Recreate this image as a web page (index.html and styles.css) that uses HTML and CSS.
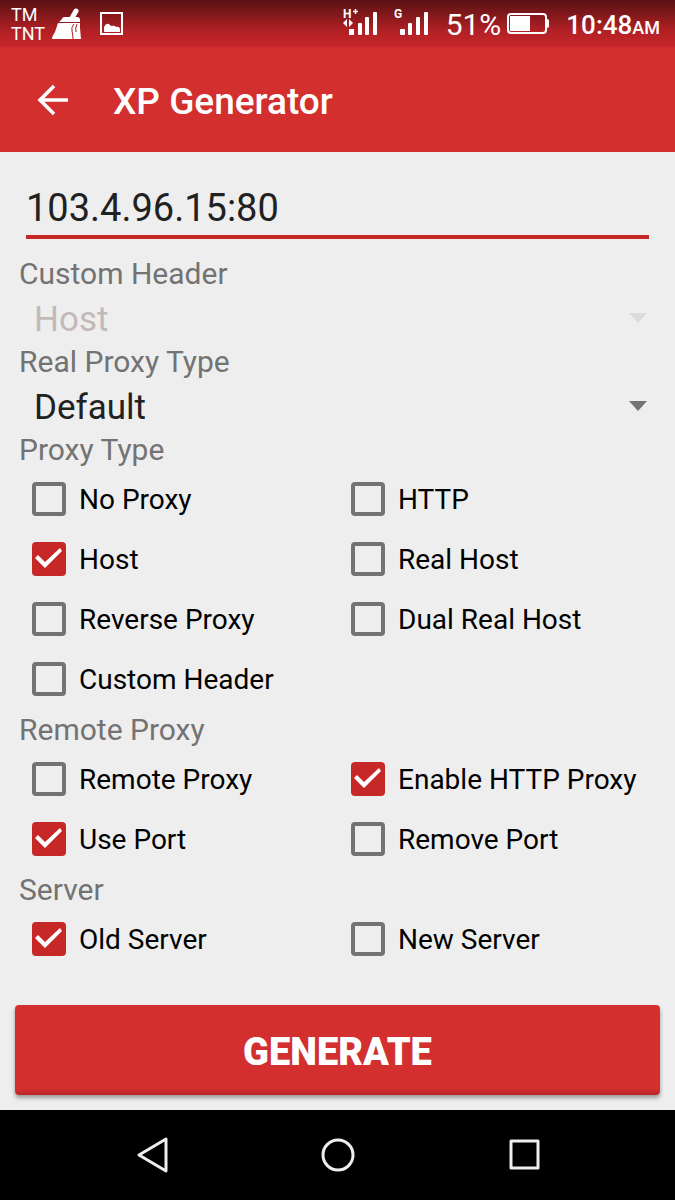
FILE: index.html
```html
<!DOCTYPE html>
<html lang="en">
<head>
<meta charset="utf-8">
<meta name="viewport" content="width=device-width, initial-scale=1">
<title>XP Generator</title>
<link rel="stylesheet" href="styles.css">
</head>
<body>
<div class="screen">
  <div class="status-bar">
    <div class="status-left">
      <div class="carrier"><span>TM</span><span>TNT</span></div>
      <svg class="icon-broom" width="32" height="32" viewBox="0 0 32 32" aria-hidden="true">
        <path d="M21 10l4-7" stroke="#fff" stroke-width="5" stroke-linecap="round"/>
        <path d="M11 11q0-2 3-2h12q3 0 3 3v2H8z" fill="#fff"/>
        <path d="M7 15h22v5l1 11H1q0-3 3-7z" fill="#fff"/>
        <path d="M23 16q-3 3-2 7t1 8M26 16q-2 4-1 8" fill="none" stroke="#a51e22" stroke-width="1"/>
      </svg>
      <svg class="icon-picture" width="24" height="24" viewBox="0 0 24 24" aria-hidden="true">
        <rect x="1" y="1" width="21" height="21" fill="none" stroke="#fff" stroke-width="2"/>
        <path d="M4 20v-5q3-6 7-1 4-1 5 1 4-1 4 3v2z" fill="#fff"/>
      </svg>
    </div>
    <div class="status-right">
      <svg class="icon-signal" width="88" height="30" viewBox="0 0 88 30" fill="#fff" aria-hidden="true">
        <text class="net" x="0" y="11">H</text>
        <path d="M10 4.500h5M12.500 2v5" stroke="#fff" stroke-width="1.500"/>
        <path d="M0 16l4-4v8zM10 16l-4-4v8z"/>
        <rect x="6" y="22" width="5" height="6"/>
        <rect x="15" y="16" width="4" height="12" rx="1"/>
        <rect x="22" y="10" width="4" height="18" rx="1"/>
        <rect x="30" y="5" width="4" height="23" rx="1"/>
        <text class="net" x="51" y="11">G</text>
        <rect x="57" y="22" width="5" height="6" rx="1"/>
        <rect x="65" y="16" width="4" height="12" rx="1"/>
        <rect x="73" y="10" width="4" height="18" rx="1"/>
        <rect x="81" y="5" width="4" height="23" rx="1"/>
      </svg>
      <span class="percent">51%</span>
      <svg class="icon-battery" width="42" height="22" viewBox="0 0 42 22" aria-hidden="true">
        <rect x="1" y="1" width="38" height="19" rx="3" fill="none" stroke="#fff" stroke-width="2"/>
        <rect x="3" y="3" width="20" height="15" fill="#fff"/>
        <path d="M39 6h1q2 0 2 2v5q0 2-2 2h-1z" fill="#fff"/>
      </svg>
      <span class="clock">10:48<small>AM</small></span>
    </div>
  </div>

  <header class="app-bar">
    <button class="back" type="button" aria-label="Back">
      <svg width="32" height="32" viewBox="0 0 32 32" fill="none" stroke="#fff" stroke-width="3.600" aria-hidden="true">
        <path d="M31 16H4M17 2L3 16l14 14"/>
      </svg>
    </button>
    <h1>XP Generator</h1>
  </header>

  <form class="form">
    <div class="address"><input type="text" value="103.4.96.15:80" aria-label="Proxy address"></div>

    <label class="section" for="custom-header">Custom Header</label>
    <div class="spinner spinner-off">
      <select id="custom-header" disabled><option>Host</option></select>
      <svg width="18" height="10" viewBox="0 0 18 10" aria-hidden="true"><path d="M0 0h18L9 10z"/></svg>
    </div>

    <label class="section" for="real-type">Real Proxy Type</label>
    <div class="spinner">
      <select id="real-type"><option>Default</option></select>
      <svg width="18" height="10" viewBox="0 0 18 10" aria-hidden="true"><path d="M0 0h18L9 10z"/></svg>
    </div>

    <h2 class="section">Proxy Type</h2>
    <div class="options">
      <label class="option"><input type="checkbox">No Proxy</label>
      <label class="option"><input type="checkbox">HTTP</label>
      <label class="option"><input type="checkbox" checked>Host</label>
      <label class="option"><input type="checkbox">Real Host</label>
      <label class="option"><input type="checkbox">Reverse Proxy</label>
      <label class="option"><input type="checkbox">Dual Real Host</label>
      <label class="option"><input type="checkbox">Custom Header</label>
    </div>

    <h2 class="section">Remote Proxy</h2>
    <div class="options">
      <label class="option"><input type="checkbox">Remote Proxy</label>
      <label class="option"><input type="checkbox" checked>Enable HTTP Proxy</label>
      <label class="option"><input type="checkbox" checked>Use Port</label>
      <label class="option"><input type="checkbox">Remove Port</label>
    </div>

    <h2 class="section">Server</h2>
    <div class="options">
      <label class="option"><input type="checkbox" checked>Old Server</label>
      <label class="option"><input type="checkbox">New Server</label>
    </div>

    <button class="generate" type="button">GENERATE</button>
  </form>

  <nav class="nav-bar">
    <button type="button" aria-label="Back">
      <svg width="36" height="36" viewBox="0 0 36 36" fill="none" stroke="#eee" stroke-width="3" stroke-linejoin="round" aria-hidden="true"><path d="M31 2v32L4 18z"/></svg>
    </button>
    <button type="button" aria-label="Home">
      <svg width="36" height="36" viewBox="0 0 36 36" fill="none" stroke="#eee" stroke-width="3" aria-hidden="true"><circle cx="18" cy="18" r="15"/></svg>
    </button>
    <button type="button" aria-label="Recent apps">
      <svg width="36" height="36" viewBox="0 0 36 36" fill="none" stroke="#eee" stroke-width="3" stroke-linejoin="round" aria-hidden="true"><rect x="5" y="4" width="27" height="27"/></svg>
    </button>
  </nav>
</div>
</body>
</html>
```

FILE: styles.css
```css
* {
  box-sizing: border-box;
}

body {
  margin: 0;
  background: #eee;
  color: #000;
  font-family: Roboto, "Noto Sans", sans-serif;
}

button,
input,
select {
  margin: 0;
  padding: 0;
  border: 0;
  background: none;
  color: inherit;
  font: inherit;
}

svg {
  display: block;
  flex: none;
}

.screen {
  display: flex;
  flex-direction: column;
  min-height: 100vh;
}

.status-bar {
  display: flex;
  justify-content: space-between;
  height: 48px;
  padding: 0 15px 0 11px;
  background: linear-gradient(#5a1114 0, #7a171a 12px, #b02024 30px, #c62629 46px, #d32f2f 48px);
  color: #fff;
}

.status-left,
.status-right {
  display: flex;
  align-items: center;
}

.carrier {
  display: flex;
  flex-direction: column;
  font-size: 18px;
  line-height: 19px;
}

.icon-broom {
  margin-left: 6px;
}

.icon-picture {
  margin-left: 17px;
}

.net {
  font-size: 12px;
  font-weight: 700;
}

.icon-signal {
  margin-top: -4px;
}

.percent {
  margin-left: 15px;
  font-size: 30px;
}

.icon-battery {
  margin-left: 6px;
}

.clock {
  margin-left: 17px;
  padding-top: 2px;
  font-size: 26px;
  font-weight: 500;
}

.clock small {
  font-size: 18px;
}

.app-bar {
  display: flex;
  align-items: center;
  gap: 44px;
  height: 104px;
  padding: 0 37px;
  background: #d32f2f;
  color: #fff;
}

.app-bar h1 {
  margin: 0;
  padding-top: 3px;
  font-size: 37px;
  font-weight: 500;
}

.form {
  display: flex;
  flex: 1;
  flex-direction: column;
  padding: 20px 15px 15px;
}

.address {
  display: flex;
  margin: 0 11px 15px;
  border-bottom: 4px solid #c62828;
}

.address input {
  flex: 1;
  min-width: 0;
  height: 63px;
  padding: 8px 0 0;
  color: #212121;
  font-size: 38px;
  outline: none;
}

.section {
  margin: 0;
  padding: 0 4px;
  color: #737373;
  font-size: 30px;
  font-weight: 400;
  line-height: 40px;
}

.spinner {
  display: grid;
  align-items: center;
  padding: 0 13px 0 19px;
  color: #212121;
  fill: #737373;
}

.spinner > * {
  grid-area: 1 / 1;
}

.spinner select {
  width: 100%;
  height: 48px;
  padding-top: 2px;
  appearance: none;
  font-size: 35px;
  opacity: 1;
}

.spinner svg {
  justify-self: end;
  pointer-events: none;
}

.spinner-off {
  color: #c4b9b9;
  fill: #dcdcdc;
}

.options {
  display: grid;
  grid-template-columns: 1fr 1fr;
  padding: 0 3px 0 4px;
}

.option {
  display: flex;
  align-items: center;
  gap: 13px;
  height: 60px;
  padding: 0 0 2px 13px;
  font-size: 28px;
  white-space: nowrap;
}

.option input {
  flex: none;
  width: 34px;
  height: 34px;
  appearance: none;
  border: 4px solid #737373;
  border-radius: 4px;
}

.option input:checked {
  border: 0;
  background: #c62828;
}

.option input:checked::before {
  display: block;
  width: 34px;
  height: 34px;
  background: #fff;
  clip-path: polygon(3px 16px, 6px 13px, 13px 20px, 28px 6px, 30px 9px, 13px 26px);
  content: "";
}

.generate {
  height: 90px;
  margin-top: auto;
  padding-top: 4px;
  border-radius: 4px;
  background: linear-gradient(#d32f2f 84px, #b92629);
  box-shadow: 0 3px 4px rgba(0, 0, 0, 0.35);
  color: #fff;
  font-size: 38px;
  font-weight: 900;
}

.nav-bar {
  display: grid;
  grid-template-columns: repeat(3, 1fr);
  height: 90px;
  padding: 0 58px 0 60px;
  background: #000;
}

.nav-bar button {
  display: flex;
  align-items: center;
  justify-content: center;
}
```
